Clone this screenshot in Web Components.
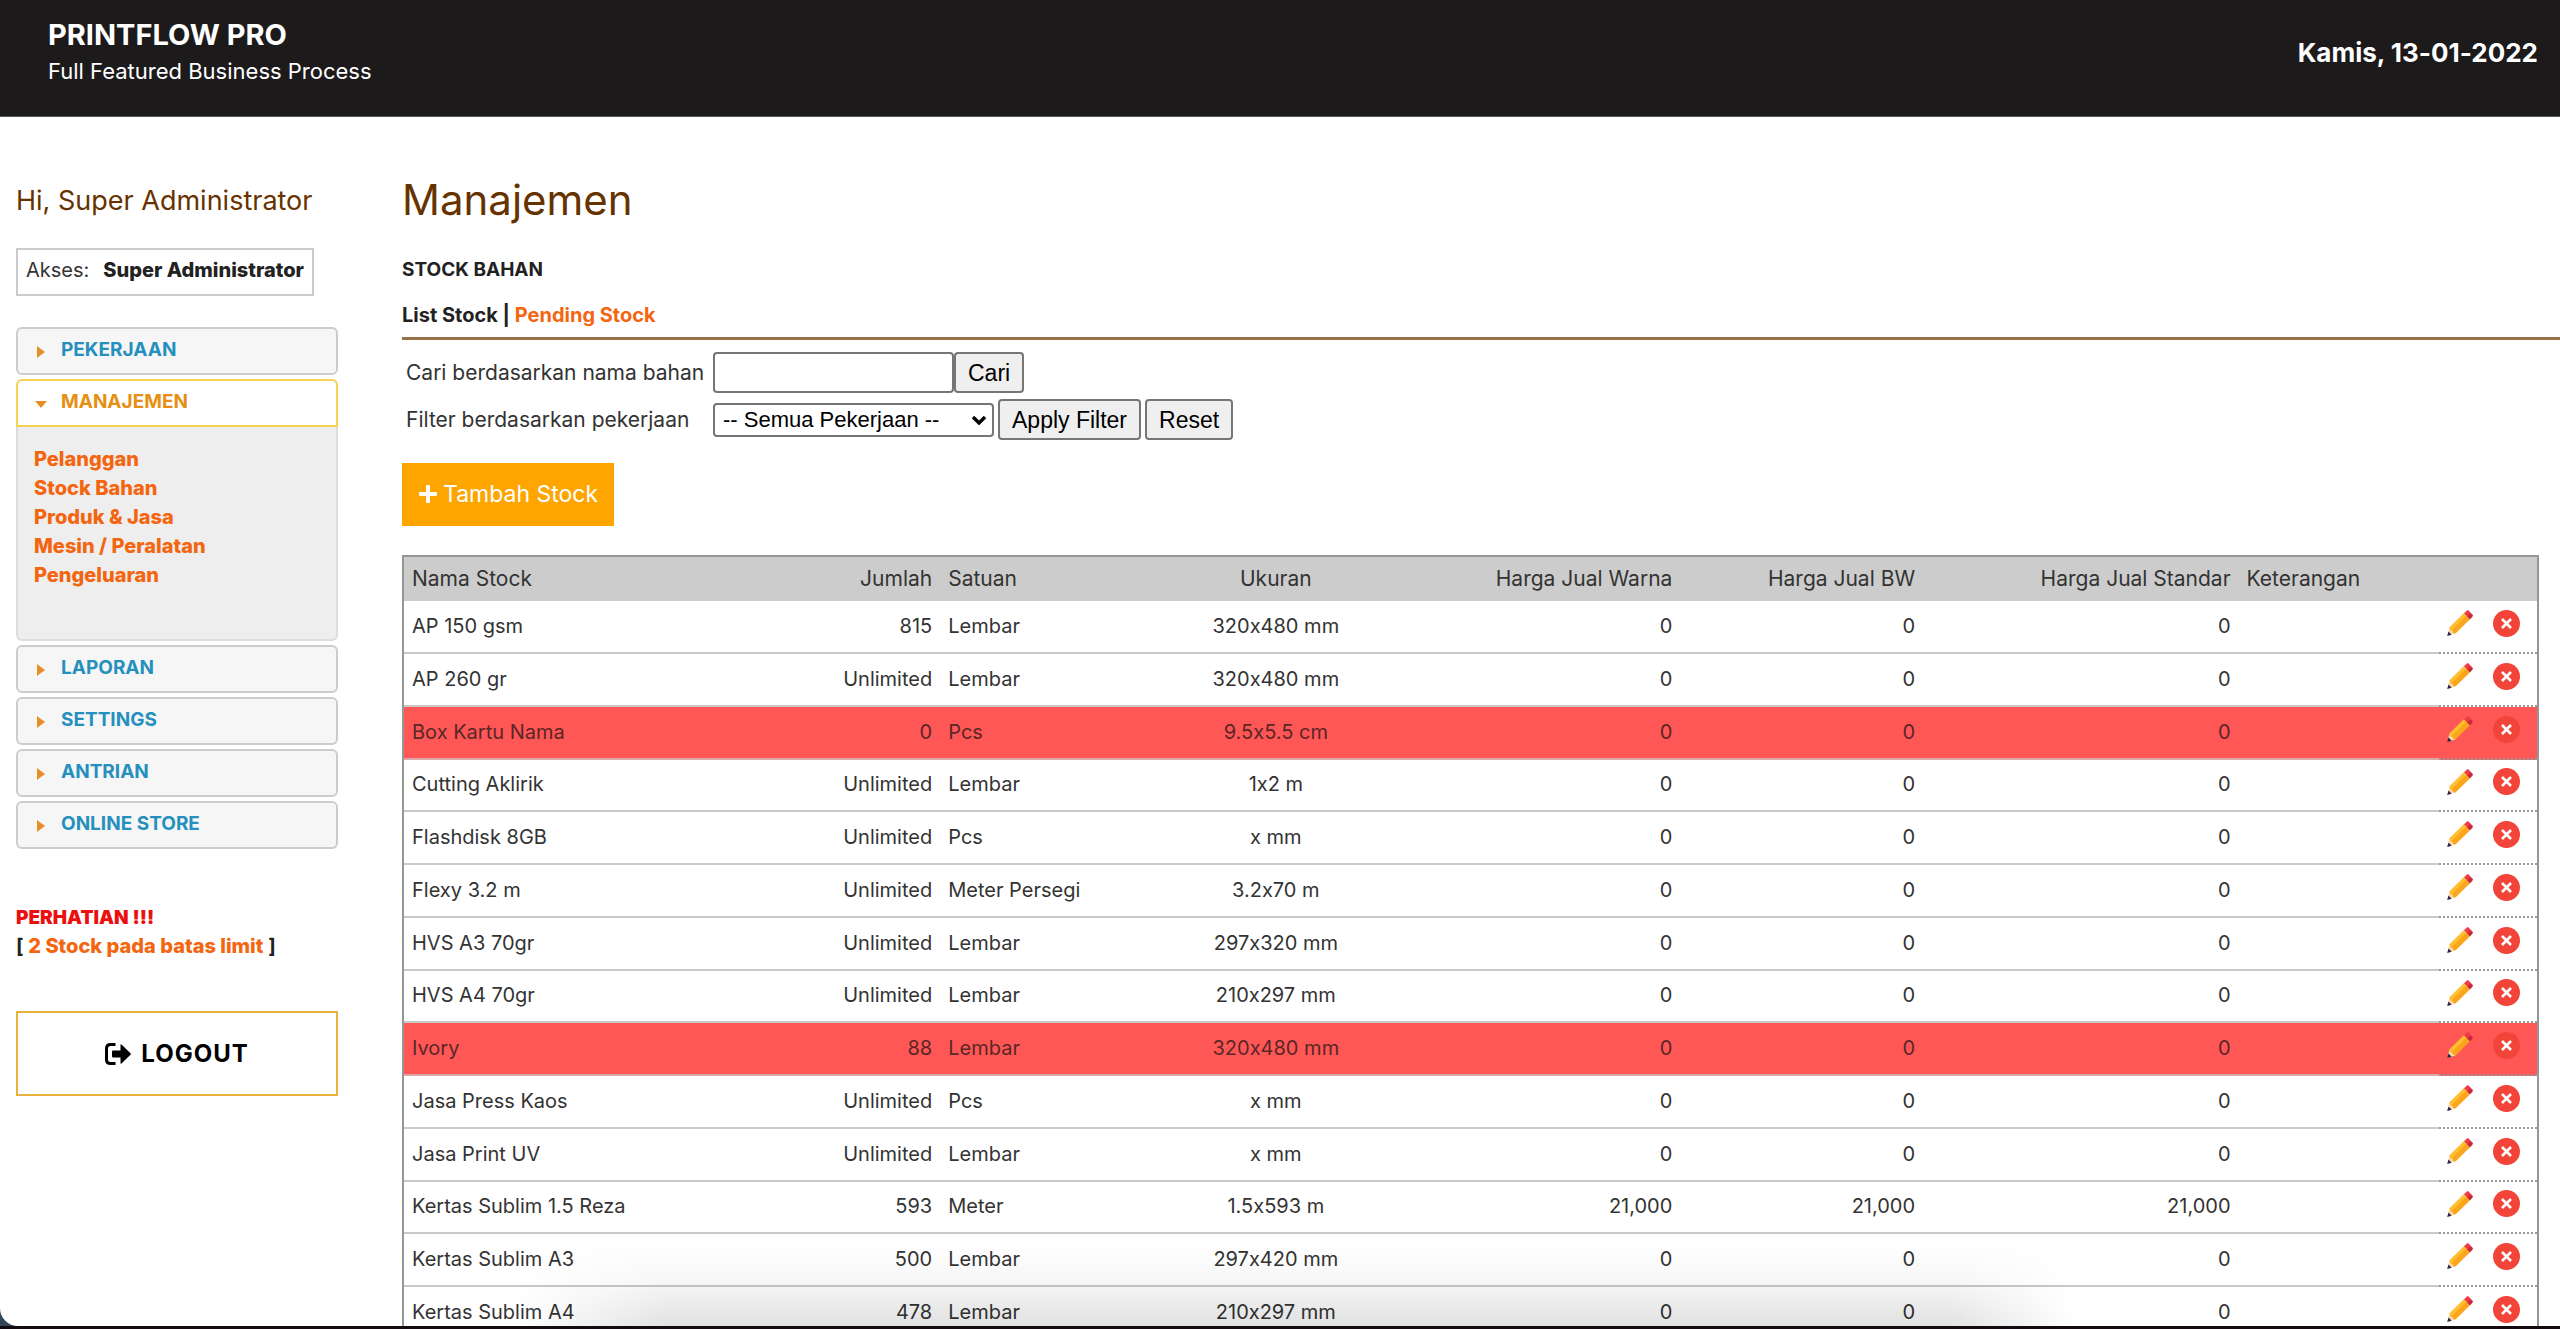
<!DOCTYPE html>
<html lang="id">
<head>
<meta charset="utf-8">
<title>Printflow Pro</title>
<style>
html{height:100%;background:linear-gradient(#33475b 0 calc(100% - 3px),#120c10 0)}
body{margin:0;height:100%;font-family:Inter,"Liberation Sans",sans-serif;font-size:20px;line-height:28px;font-variant-ligatures:no-contextual;color:#333}
</style>
</head>
<body>
<print-app></print-app>
<script>
const define = (name, html, init) => {
  const tpl = document.createElement('template');
  tpl.innerHTML = html;
  customElements.define(name, class extends HTMLElement {
    constructor() {
      super();
      this.attachShadow({mode: 'open'}).append(tpl.content.cloneNode(true));
    }
    connectedCallback() { if (init) init(this, this.shadowRoot); }
  });
};

const icons = {
  logout: ['0 0 26 22', '<path d="M10.500 1.500H5.500Q1.500 1.500 1.500 5.500V16.500Q1.500 20.500 5.500 20.500H10.500" fill="none" stroke="#000" stroke-width="3"/><path d="M8 7.500h7.500V2q0-1.200 1-.4l9 8.600q.7.800 0 1.600l-9 8.600q-1 .8-1-.4v-5.500H8q-1 0-1-1V8.500q0-1 1-1z"/>'],
  plus: ['0 0 18 18', '<path d="M9 1.500v15M1.500 9h15" stroke="#fff" stroke-width="4" stroke-linecap="round"/>'],
  chevron: ['0 0 16 10', '<path d="M2 2l6 6 6-6" fill="none" stroke="#000" stroke-width="3.400"/>'],
  right: ['0 0 8 12', '<path d="M0 0l8 6L0 12z" fill="#e58f27"/>'],
  down: ['0 0 12 7', '<path d="M0 0h12L6 7z" fill="#e58f27"/>'],
  pencil: ['0 0 26 26', '<path d="M2.500 17.500L8.500 23.500 0.500 25.800z" fill="#fbd9a6"/><path d="M1.500 21.500l3.200 3.200-4.500 1.200z" fill="#2f2350"/><path d="M2.500 17.500L17 3.200l6 6L8.500 23.500l-2.200-.6-.7-2-2-.6z" fill="#fba51c"/><path d="M2.500 17.500L17 3.200l2.200 2.200L4.600 20.200l-1-.1z" fill="#ffc02e"/><path d="M17 3.200L20 .4q.8-.6 1.500 0l4.200 4.300q.5.700 0 1.400l-2.700 3.100z" fill="#ee3b46"/><path d="M20.300 6.400l3-3 2.300 2.300v.5l-2.600 3z" fill="#c4283f"/>'],
  cross: ['0 0 27 27', '<circle cx="13.500" cy="13.500" r="13.500" fill="#f24438"/><path d="M9 9l9 9M18 9l-9 9" stroke="#fff" stroke-width="2.600"/>']
};
define('ui-icon', '<style>:host{display:inline-flex;flex:none}svg{display:block}</style>', (el, root) => {
  const [box, shape] = icons[el.getAttribute('name')];
  const [, , w, h] = box.split(' ');
  const svg = document.createElement('template');
  svg.innerHTML = `<svg viewBox="${box}" width="${w}" height="${h}" aria-hidden="true">${shape}</svg>`;
  root.append(svg.content);
});

define('app-header', `<style>
:host{display:flex;justify-content:space-between;align-items:center;height:117px;box-sizing:border-box;padding:0 22px 10px 48px;background:#1d1a1b;color:#fff;border-bottom:1px solid #555}
.name{font-size:29px;line-height:37px;font-weight:700}
.tag{font-size:22px;line-height:37px}
time{font-size:26px;line-height:36px;font-weight:700}
</style><div><div class="name"><slot name="name"></slot></div><div class="tag"><slot name="tag"></slot></div></div><time datetime="2022-01-13"><slot name="date"></slot></time>`);

define('menu-section', `<style>
:host{display:block}
button{display:flex;align-items:center;width:100%;height:48px;box-sizing:border-box;padding:0 0 2px 0;border:2px solid #ccc;border-radius:6px;background:#f6f6f6;color:#2590bd;font:inherit;font-size:19px;font-weight:700;text-align:left;cursor:pointer}
.mark{display:flex;justify-content:center;width:26px;margin:4px 7px 0 10px}
.panel{display:none;box-sizing:border-box;min-height:214px;padding:18px 16px;border:2px solid #ddd;border-top:0;border-radius:0 0 6px 6px;background:#eee}
:host([open]) .panel{display:block}
:host([open]) button{background:#fff;border-color:#f5d154;border-radius:6px 6px 0 0;color:#e59012}
</style><button type="button"><span class="mark"></span><slot name="label"></slot></button><div class="panel"><slot></slot></div>`, (el, root) => {
  const open = el.hasAttribute('open');
  root.querySelector('button').setAttribute('aria-expanded', open);
  root.querySelector('.mark').innerHTML = `<ui-icon name="${open ? 'down' : 'right'}"></ui-icon>`;
});

define('side-bar', `<style>
:host{display:block;width:322px;flex:none;padding-top:64px}
.hi{font-size:27px;line-height:40px;color:#630}
.role{display:flex;width:fit-content;box-sizing:border-box;height:48px;margin-top:27px;padding:6px 8px;gap:14px;border:2px solid #ccc;white-space:nowrap}
.role b{color:#222;font-weight:800}
nav{display:flex;flex-direction:column;gap:4px;margin-top:31px}
a{color:#f4650f;font-weight:800;text-decoration:none}
menu-section a{display:block;line-height:29px}
.alert{margin-top:55px;font-weight:700;color:#222}
.alert strong{display:block;font-size:19px;color:#ec0f0f}
.out{display:flex;align-items:center;justify-content:center;gap:10px;width:100%;height:85px;margin-top:51px;border:2px solid #e9b03b;background:#fff;color:#000;font:700 24px/30px Inter,sans-serif;letter-spacing:1px}
</style>
<div class="hi">Hi, Super Administrator</div>
<div class="role"><span>Akses:</span><b>Super Administrator</b></div>
<nav>
<menu-section><span slot="label">PEKERJAAN</span></menu-section>
<menu-section open><span slot="label">MANAJEMEN</span>
<a href="#pelanggan">Pelanggan</a><a href="#stock">Stock Bahan</a><a href="#produk">Produk &amp; Jasa</a><a href="#mesin">Mesin / Peralatan</a><a href="#pengeluaran">Pengeluaran</a></menu-section>
<menu-section><span slot="label">LAPORAN</span></menu-section>
<menu-section><span slot="label">SETTINGS</span></menu-section>
<menu-section><span slot="label">ANTRIAN</span></menu-section>
<menu-section><span slot="label">ONLINE STORE</span></menu-section>
</nav>
<div class="alert"><strong>PERHATIAN !!!</strong>[ <a href="#limit">2 Stock pada batas limit</a> ]</div>
<button class="out" type="button"><ui-icon name="logout"></ui-icon>LOGOUT</button>`);

define('stock-filter', `<style>
:host{display:block;margin-top:12px}
form{display:grid;grid-template-columns:307px 1fr;row-gap:6px;padding-left:4px}
label,.row{display:flex;align-items:center}
label{font-size:21px}
.row{height:41px}
.pick{gap:4px}
input,button,select{box-sizing:border-box;font:23px/28px "Liberation Sans",sans-serif;color:#000;border:2px solid #767676;border-radius:4px;margin:0}
input{width:241px;height:41px;padding:0 4px;background:#fff}
button{height:41px;padding:0 12px;background:#efefef}
.select{display:grid;align-items:center;width:281px}
.select>*{grid-area:1/1}
.select ui-icon{justify-self:end;margin-right:7px;pointer-events:none}
select{width:100%;height:34px;padding:0 8px;font-size:22px;appearance:none;background:#fff}
</style><form>
<label for="q">Cari berdasarkan nama bahan</label><div class="row"><input id="q" type="text"><button type="button">Cari</button></div>
<label for="job">Filter berdasarkan pekerjaan</label><div class="row pick"><div class="select"><select id="job"><option>-- Semua Pekerjaan --</option></select><ui-icon name="chevron"></ui-icon></div><button type="button">Apply Filter</button><button type="reset">Reset</button></div>
</form>`);

const stock = [
  ['AP 150 gsm', '815', 'Lembar', '320x480 mm'],
  ['AP 260 gr', 'Unlimited', 'Lembar', '320x480 mm'],
  ['Box Kartu Nama', '0', 'Pcs', '9.5x5.5 cm', '0', true],
  ['Cutting Aklirik', 'Unlimited', 'Lembar', '1x2 m'],
  ['Flashdisk 8GB', 'Unlimited', 'Pcs', 'x mm'],
  ['Flexy 3.2 m', 'Unlimited', 'Meter Persegi', '3.2x70 m'],
  ['HVS A3 70gr', 'Unlimited', 'Lembar', '297x320 mm'],
  ['HVS A4 70gr', 'Unlimited', 'Lembar', '210x297 mm'],
  ['Ivory', '88', 'Lembar', '320x480 mm', '0', true],
  ['Jasa Press Kaos', 'Unlimited', 'Pcs', 'x mm'],
  ['Jasa Print UV', 'Unlimited', 'Lembar', 'x mm'],
  ['Kertas Sublim 1.5 Reza', '593', 'Meter', '1.5x593 m', '21,000'],
  ['Kertas Sublim A3', '500', 'Lembar', '297x420 mm'],
  ['Kertas Sublim A4', '478', 'Lembar', '210x297 mm']
];
define('stock-table', `<style>
:host{display:block;margin:29px 21px 0 0}
table{width:100%;table-layout:fixed;border-collapse:separate;border-spacing:0;border:2px solid #949794;border-bottom:0}
th,td{box-sizing:border-box;padding:0 8px;font-weight:400;text-align:left;white-space:nowrap}
th{height:44px;background:#ccc;font-size:21px}
td{height:53px;padding-bottom:2px;border-bottom:2px solid #c9c9c9}
tr:nth-child(4n) td{height:52px}
.r{text-align:right}.c{text-align:center}
.low td{background:#ff5656;border-color:#dba8a8;color:#5a2626}
td.act{padding:0 7px 7px 8px;border-bottom:2px dotted #999}
.act div{display:flex;align-items:center;gap:20px}
.act a{display:flex}
</style><table><colgroup></colgroup><thead><tr><th>Nama Stock</th><th class="r">Jumlah</th><th>Satuan</th><th class="c">Ukuran</th><th class="r">Harga Jual Warna</th><th class="r">Harga Jual BW</th><th class="r">Harga Jual Standar</th><th>Keterangan</th><th></th></tr></thead><tbody></tbody></table>`, (el, root) => {
  root.querySelector('colgroup').innerHTML = [17.65, 7.49, 10.35, 10.77, 13.58, 11.38, 14.79, 9.41, 4.58].map(w => `<col style="width:${w}%">`).join('');
  root.querySelector('tbody').innerHTML = stock.map(([name, qty, unit, size, price = '0', low]) =>
    `<tr${low ? ' class="low"' : ''}><td>${name}</td><td class="r">${qty}</td><td>${unit}</td><td class="c">${size}</td>` +
    `<td class="r">${price}</td>`.repeat(3) +
    `<td></td><td class="act"><div><a href="#edit" aria-label="Edit"><ui-icon name="pencil"></ui-icon></a><a href="#hapus" aria-label="Hapus"><ui-icon name="cross"></ui-icon></a></div></td></tr>`).join('');
});

define('stock-page', `<style>
:host{display:block;flex:1;min-width:0;padding-top:58px}
h1{margin:0;font-size:42px;line-height:50px;font-weight:400;color:#630}
h2{margin:31px 0 17px;font-size:19px;line-height:28px;font-weight:700;color:#222}
.tabs{font-weight:700;color:#222;padding-bottom:8px;border-bottom:3px solid #98704a}
.tabs a{color:#f4650f;text-decoration:none}
.add{display:flex;align-items:center;gap:6px;width:fit-content;height:63px;box-sizing:border-box;padding:0 16px 2px 17px;margin-top:23px;border:0;background:#ffa500;color:#fff;font:23px/28px Inter,sans-serif}
</style><h1>Manajemen</h1><h2>STOCK BAHAN</h2><div class="tabs">List Stock | <a href="#pending">Pending Stock</a></div>
<stock-filter></stock-filter>
<button class="add" type="button"><ui-icon name="plus"></ui-icon>Tambah Stock</button>
<stock-table></stock-table>`);

define('print-app', `<style>
:host{display:block;position:relative;height:calc(100% - 3px);overflow:hidden;background:#fff;border-radius:0 0 0 18px}
main{display:flex;gap:64px;padding-left:16px}
.shade{position:absolute;left:20%;right:19%;bottom:0;height:84px;pointer-events:none;background:linear-gradient(#0000,#00000008 45%,#0000001e);-webkit-mask:linear-gradient(90deg,#0000,#000 10%,#000 92%,#0000)}
</style><app-header><span slot="name">PRINTFLOW PRO</span><span slot="tag">Full Featured Business Process</span><span slot="date">Kamis, 13-01-2022</span></app-header>
<main><side-bar></side-bar><stock-page></stock-page></main><div class="shade"></div>`);
</script>
</body>
</html>
